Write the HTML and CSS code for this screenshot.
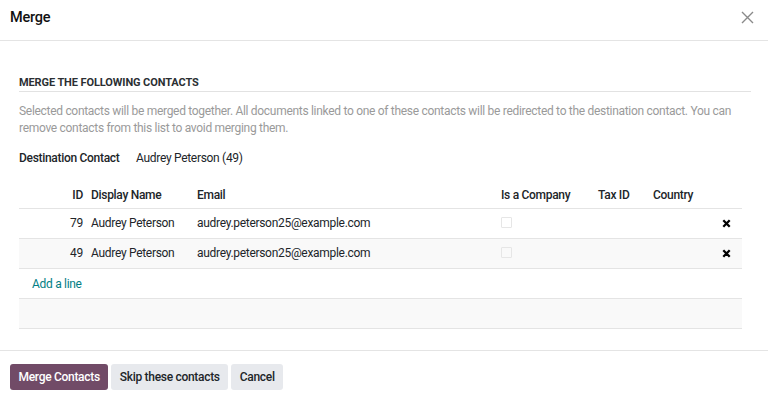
FILE: index.html
```html
<!DOCTYPE html>
<html lang="en">

<head>
    <meta charset="UTF-8">
    <meta name="viewport" content="width=device-width, initial-scale=1.0">
    <link rel="stylesheet" href="styles.css">
    <title>Merge</title>
</head>

<body>
    <div class="modal">

        <div class="modal-header">
            <h4 class="modal-title">Merge</h4>
            <button type="button" class="btn-close" aria-label="Close">
                <svg width="13" height="13" viewBox="0 0 13 13">
                    <path d="M1 1L12 12M12 1L1 12" stroke="#8a8a8a" stroke-width="1.4" fill="none" />
                </svg>
            </button>
        </div>

        <div class="modal-body">
            <div class="separator">MERGE THE FOLLOWING CONTACTS</div>
            <p class="help">
                Selected contacts will be merged together. All documents linked to one of these contacts will be redirected to the destination contact. You can remove contacts from this list to avoid merging them.
            </p>

            <div class="dest">
                <span class="dest-label">Destination Contact</span><span class="dest-value">Audrey Peterson (49)</span>
            </div>

            <table class="list">
                <colgroup>
                    <col class="col-id">
                    <col class="col-name">
                    <col class="col-email">
                    <col class="col-company">
                    <col class="col-vat">
                    <col class="col-country">
                    <col class="col-del">
                </colgroup>
                <thead>
                    <tr>
                        <th class="num">ID</th>
                        <th>Display Name</th>
                        <th>Email</th>
                        <th>Is a Company</th>
                        <th>Tax ID</th>
                        <th>Country</th>
                        <th></th>
                    </tr>
                </thead>
                <tbody>
                    <tr>
                        <td class="num">79</td>
                        <td>Audrey Peterson</td>
                        <td>audrey.peterson25@example.com</td>
                        <td><span class="check"></span></td>
                        <td></td>
                        <td></td>
                        <td class="del">
                            <svg width="9" height="9" viewBox="0 0 9 9">
                                <path d="M1.3 1.3L7.7 7.7M7.7 1.3L1.3 7.7" stroke="#000" stroke-width="2.3" fill="none" />
                            </svg>
                        </td>
                    </tr>
                    <tr class="alt">
                        <td class="num">49</td>
                        <td>Audrey Peterson</td>
                        <td>audrey.peterson25@example.com</td>
                        <td><span class="check"></span></td>
                        <td></td>
                        <td></td>
                        <td class="del">
                            <svg width="9" height="9" viewBox="0 0 9 9">
                                <path d="M1.3 1.3L7.7 7.7M7.7 1.3L1.3 7.7" stroke="#000" stroke-width="2.3" fill="none" />
                            </svg>
                        </td>
                    </tr>
                    <tr>
                        <td colspan="7" class="add"><a href="#">Add a line</a></td>
                    </tr>
                    <tr class="alt">
                        <td colspan="7"></td>
                    </tr>
                </tbody>
            </table>
        </div>

        <div class="modal-footer">
            <button type="button" class="btn btn-primary">Merge Contacts</button>
            <button type="button" class="btn btn-secondary">Skip these contacts</button>
            <button type="button" class="btn btn-secondary">Cancel</button>
        </div>

    </div>
</body>

</html>
```

FILE: styles.css
```css
html {
    box-sizing: border-box;
}

*,
*::before,
*::after {
    margin: 0;
    padding: 0;
    box-sizing: inherit;
}

body {
    font-family: Roboto, "Noto Sans", sans-serif;
    font-size: 12px;
    letter-spacing: -0.3px;
    color: #212529;
    background-color: #fff;
}

.modal-header {
    display: flex;
    align-items: center;
    justify-content: space-between;
    height: 41px;
    padding: 0 14px 6px 10px;
    border-bottom: 1px solid #e4e4e4;
}

.modal-title {
    font-size: 14.5px;
    font-weight: 500;
    letter-spacing: -0.2px;
    color: #111;
}

.btn-close {
    border: none;
    background: none;
    display: flex;
}

.modal-body {
    padding: 36px 17px 0 19px;
}

.separator {
    font-size: 11px;
    font-weight: 700;
    letter-spacing: -0.1px;
    color: #2b2f33;
    line-height: 12px;
    padding-bottom: 2px;
    border-bottom: 1px solid #e2e2e2;
}

.help {
    margin-top: 11px;
    line-height: 17px;
    color: #9a9a9a;
}

.dest {
    margin-top: 13px;
    line-height: 17px;
}

.dest-label {
    font-weight: 500;
    display: inline-block;
    width: 117px;
}

.list {
    margin-top: 17px;
    width: 723px;
    table-layout: fixed;
    border-collapse: collapse;
}

.col-id { width: 68px; }
.col-name { width: 106px; }
.col-email { width: 304px; }
.col-company { width: 97px; }
.col-vat { width: 55px; }
.col-country { width: 61px; }
.col-del { width: 32px; }

.list th {
    font-weight: 500;
    text-align: left;
    height: 24px;
    padding: 1px 4px 2px;
    border-bottom: 1px solid #e4e4e4;
}

.list td {
    height: 30px;
    padding: 0 4px;
    border-bottom: 1px solid #e4e4e4;
    white-space: nowrap;
}

.list .num {
    text-align: right;
}

.list tr.alt td {
    background-color: #f9f9f9;
}

.check {
    display: block;
    width: 11px;
    height: 11px;
    border: 1px solid #e6e6e6;
    border-radius: 1px;
    margin-top: -1px;
}

.del {
    text-align: center;
}

.del svg {
    display: block;
    margin: 0 auto;
}

.list td.add {
    padding: 2px 4px 0 13px;
}

.add a {
    color: #017e84;
    text-decoration: none;
}

.modal-footer {
    margin-top: 21px;
    border-top: 1px solid #e4e4e4;
    padding: 13px 10px;
    display: flex;
    gap: 3px;
}

.btn {
    height: 26px;
    padding: 0 8.5px;
    border: none;
    border-radius: 3px;
    font-family: inherit;
    font-size: 12px;
    letter-spacing: -0.3px;
    font-weight: 500;
}

.btn-primary {
    background-color: #714b67;
    color: #fff;
}

.btn-secondary {
    background-color: #e7e9ed;
    color: #212529;
}
```
